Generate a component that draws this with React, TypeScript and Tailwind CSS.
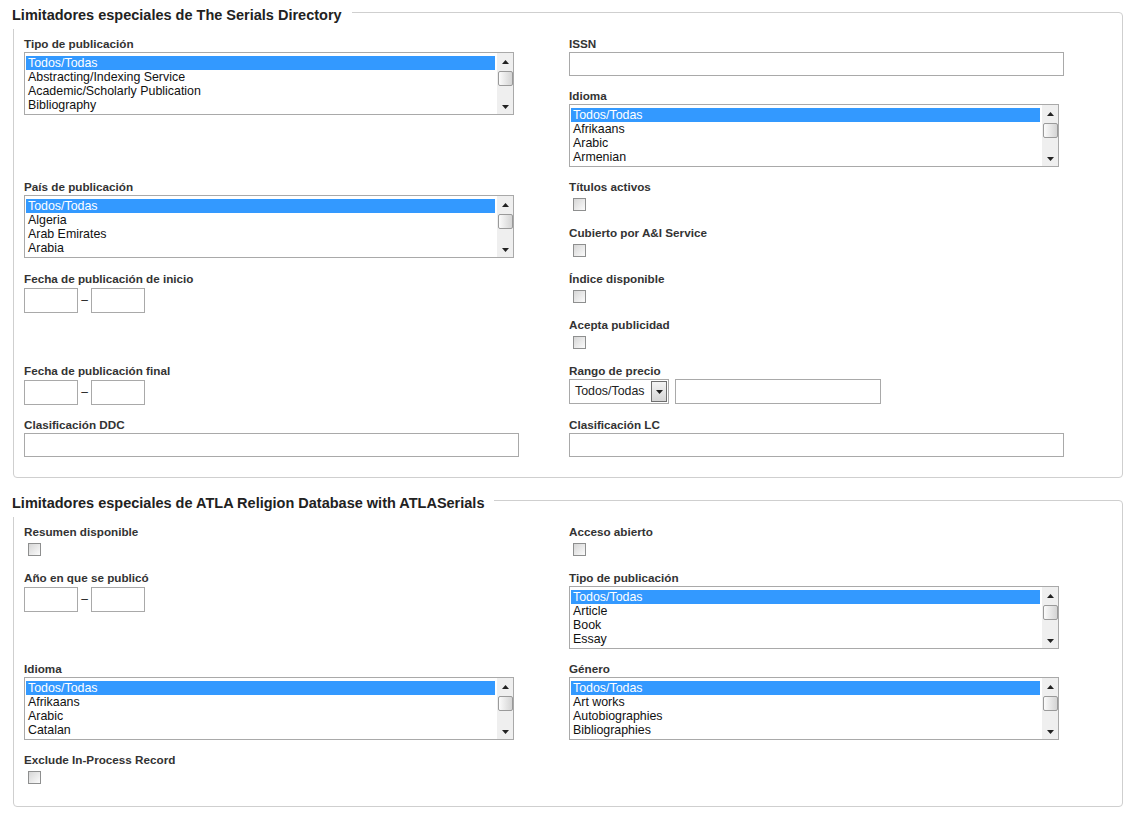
import React from "react";

const UpArrow = () => (
  <svg width="7" height="4" viewBox="0 0 7 4">
    <path d="M3.5 0 L7 4 L0 4 Z" fill="#222" />
  </svg>
);
const DownArrow = () => (
  <svg width="7" height="4" viewBox="0 0 7 4">
    <path d="M0 0 L7 0 L3.5 4 Z" fill="#222" />
  </svg>
);

const Scrollbar = () => (
  <div className="w-[16px] h-full bg-[#efefef] flex flex-col items-center shrink-0">
    <div className="h-[17px] w-full flex items-center justify-center">
      <UpArrow />
    </div>
    <div className="w-[15px] h-[15px] mt-[1px] rounded-[2px] border border-[#9a9a9a] bg-linear-to-r from-[#fbfbfb] to-[#d4d4d4]" />
    <div className="flex-1" />
    <div className="h-[15px] w-full flex items-center justify-center">
      <DownArrow />
    </div>
  </div>
);

const Listbox = ({ items }: { items: string[] }) => (
  <div className="w-[490px] h-[63px] border border-[#a9a9a9] bg-white flex overflow-hidden">
    <div className="flex-1 pt-[3px] pl-[1px] pr-[2px] overflow-hidden">
      {items.map((it, i) => (
        <div
          key={i}
          className={
            i === 0
              ? "h-[14px] leading-[14px] pl-[2px] text-[12.4px] whitespace-nowrap bg-[#3399ff] text-white"
              : "h-[14px] leading-[14px] pl-[2px] text-[12.4px] whitespace-nowrap text-[#111]"
          }
        >
          {it}
        </div>
      ))}
    </div>
    <Scrollbar />
  </div>
);

const Label = ({ children }: { children: React.ReactNode }) => (
  <div className="h-[17px] leading-[17px] text-[11.7px] font-bold text-[#333] whitespace-nowrap">{children}</div>
);

const TextInput = ({ w = "w-[495px]" }: { w?: string }) => (
  <div className={w + " h-[24px] border border-[#a9a9a9] bg-white"} />
);

const Checkbox = () => (
  <div className="w-[13px] h-[13px] ml-[4px] mt-[3px] mb-[2px] border border-[#8e8f8f] bg-linear-to-br from-[#d6d6d6] to-[#fbfbfb]" />
);

const CheckField = ({ label }: { label: string }) => (
  <div className="flex flex-col">
    <Label>{label}</Label>
    <Checkbox />
  </div>
);

const ListField = ({ label, items }: { label: string; items: string[] }) => (
  <div className="flex flex-col">
    <Label>{label}</Label>
    <Listbox items={items} />
  </div>
);

const InputField = ({ label }: { label: string }) => (
  <div className="flex flex-col">
    <Label>{label}</Label>
    <TextInput />
  </div>
);

const DateField = ({ label }: { label: string }) => (
  <div className="flex flex-col">
    <Label>{label}</Label>
    <div className="flex items-center">
      <div className="w-[54px] h-[25px] border border-[#a9a9a9] bg-white" />
      <span className="w-[13px] text-center text-[12px] text-[#222] leading-[25px] pt-[1px]">–</span>
      <div className="w-[54px] h-[25px] border border-[#a9a9a9] bg-white" />
    </div>
  </div>
);

const PriceField = () => (
  <div className="flex flex-col">
    <Label>Rango de precio</Label>
    <div className="flex items-center">
      <div className="flex items-center w-[100px] h-[25px] border border-[#a9a9a9] bg-white pl-[5px] pr-[1px]">
        <span className="flex-1 text-[12.4px] text-[#222] whitespace-nowrap">Todos/Todas</span>
        <div className="w-[16px] h-[21px] border border-[#6f6f6f] bg-linear-to-b from-[#f4f4f4] to-[#d6d6d6] flex items-center justify-center">
          <DownArrow />
        </div>
      </div>
      <div className="w-[206px] h-[25px] ml-[6px] border border-[#a9a9a9] bg-white" />
    </div>
  </div>
);

const Section = ({ title, children, className }: { title: string; children: React.ReactNode; className?: string }) => (
  <div className={"relative w-[1110px] border border-[#cfcfcf] rounded-[4px] pt-[22px] pl-[10px] pb-[20px] " + (className ?? "")}>
    <div className="absolute left-[-2px] top-[-6px] h-[22px] bg-white pr-[10px] text-[14.5px] leading-[17px] font-bold text-[#222] whitespace-nowrap">
      {title}
    </div>
    <div className="grid grid-cols-[545px_545px] gap-y-[11px]">{children}</div>
  </div>
);

const Col = ({ children }: { children: React.ReactNode }) => (
  <div className="flex flex-col gap-[11px]">{children}</div>
);

export default function App() {
  return (
    <div className="w-[1132px] h-[813px] bg-white pt-[12px] pl-[13px] font-['Liberation_Sans',Arial,sans-serif]">
      <Section title="Limitadores especiales de The Serials Directory">
        <Col>
          <ListField
            label="Tipo de publicación"
            items={["Todos/Todas", "Abstracting/Indexing Service", "Academic/Scholarly Publication", "Bibliography", "Bulletin"]}
          />
        </Col>
        <Col>
          <InputField label="ISSN" />
          <ListField label="Idioma" items={["Todos/Todas", "Afrikaans", "Arabic", "Armenian", "Azerbaijani"]} />
        </Col>
        <Col>
          <ListField label="País de publicación" items={["Todos/Todas", "Algeria", "Arab Emirates", "Arabia", "Argentina"]} />
        </Col>
        <Col>
          <CheckField label="Títulos activos" />
          <CheckField label="Cubierto por A&I Service" />
        </Col>
        <Col>
          <DateField label="Fecha de publicación de inicio" />
        </Col>
        <Col>
          <CheckField label="Índice disponible" />
          <CheckField label="Acepta publicidad" />
        </Col>
        <Col>
          <DateField label="Fecha de publicación final" />
        </Col>
        <Col>
          <PriceField />
        </Col>
        <Col>
          <InputField label="Clasificación DDC" />
        </Col>
        <Col>
          <InputField label="Clasificación LC" />
        </Col>
      </Section>

      <Section title="Limitadores especiales de ATLA Religion Database with ATLASerials" className="mt-[22px]">
        <Col>
          <CheckField label="Resumen disponible" />
        </Col>
        <Col>
          <CheckField label="Acceso abierto" />
        </Col>
        <Col>
          <DateField label="Año en que se publicó" />
        </Col>
        <Col>
          <ListField label="Tipo de publicación" items={["Todos/Todas", "Article", "Book", "Essay", "Festschrift"]} />
        </Col>
        <Col>
          <ListField label="Idioma" items={["Todos/Todas", "Afrikaans", "Arabic", "Catalan", "Chinese"]} />
        </Col>
        <Col>
          <ListField label="Género" items={["Todos/Todas", "Art works", "Autobiographies", "Bibliographies", "Biographies"]} />
        </Col>
        <Col>
          <CheckField label="Exclude In-Process Record" />
        </Col>
        <Col>
          <div />
        </Col>
      </Section>
    </div>
  );
}
